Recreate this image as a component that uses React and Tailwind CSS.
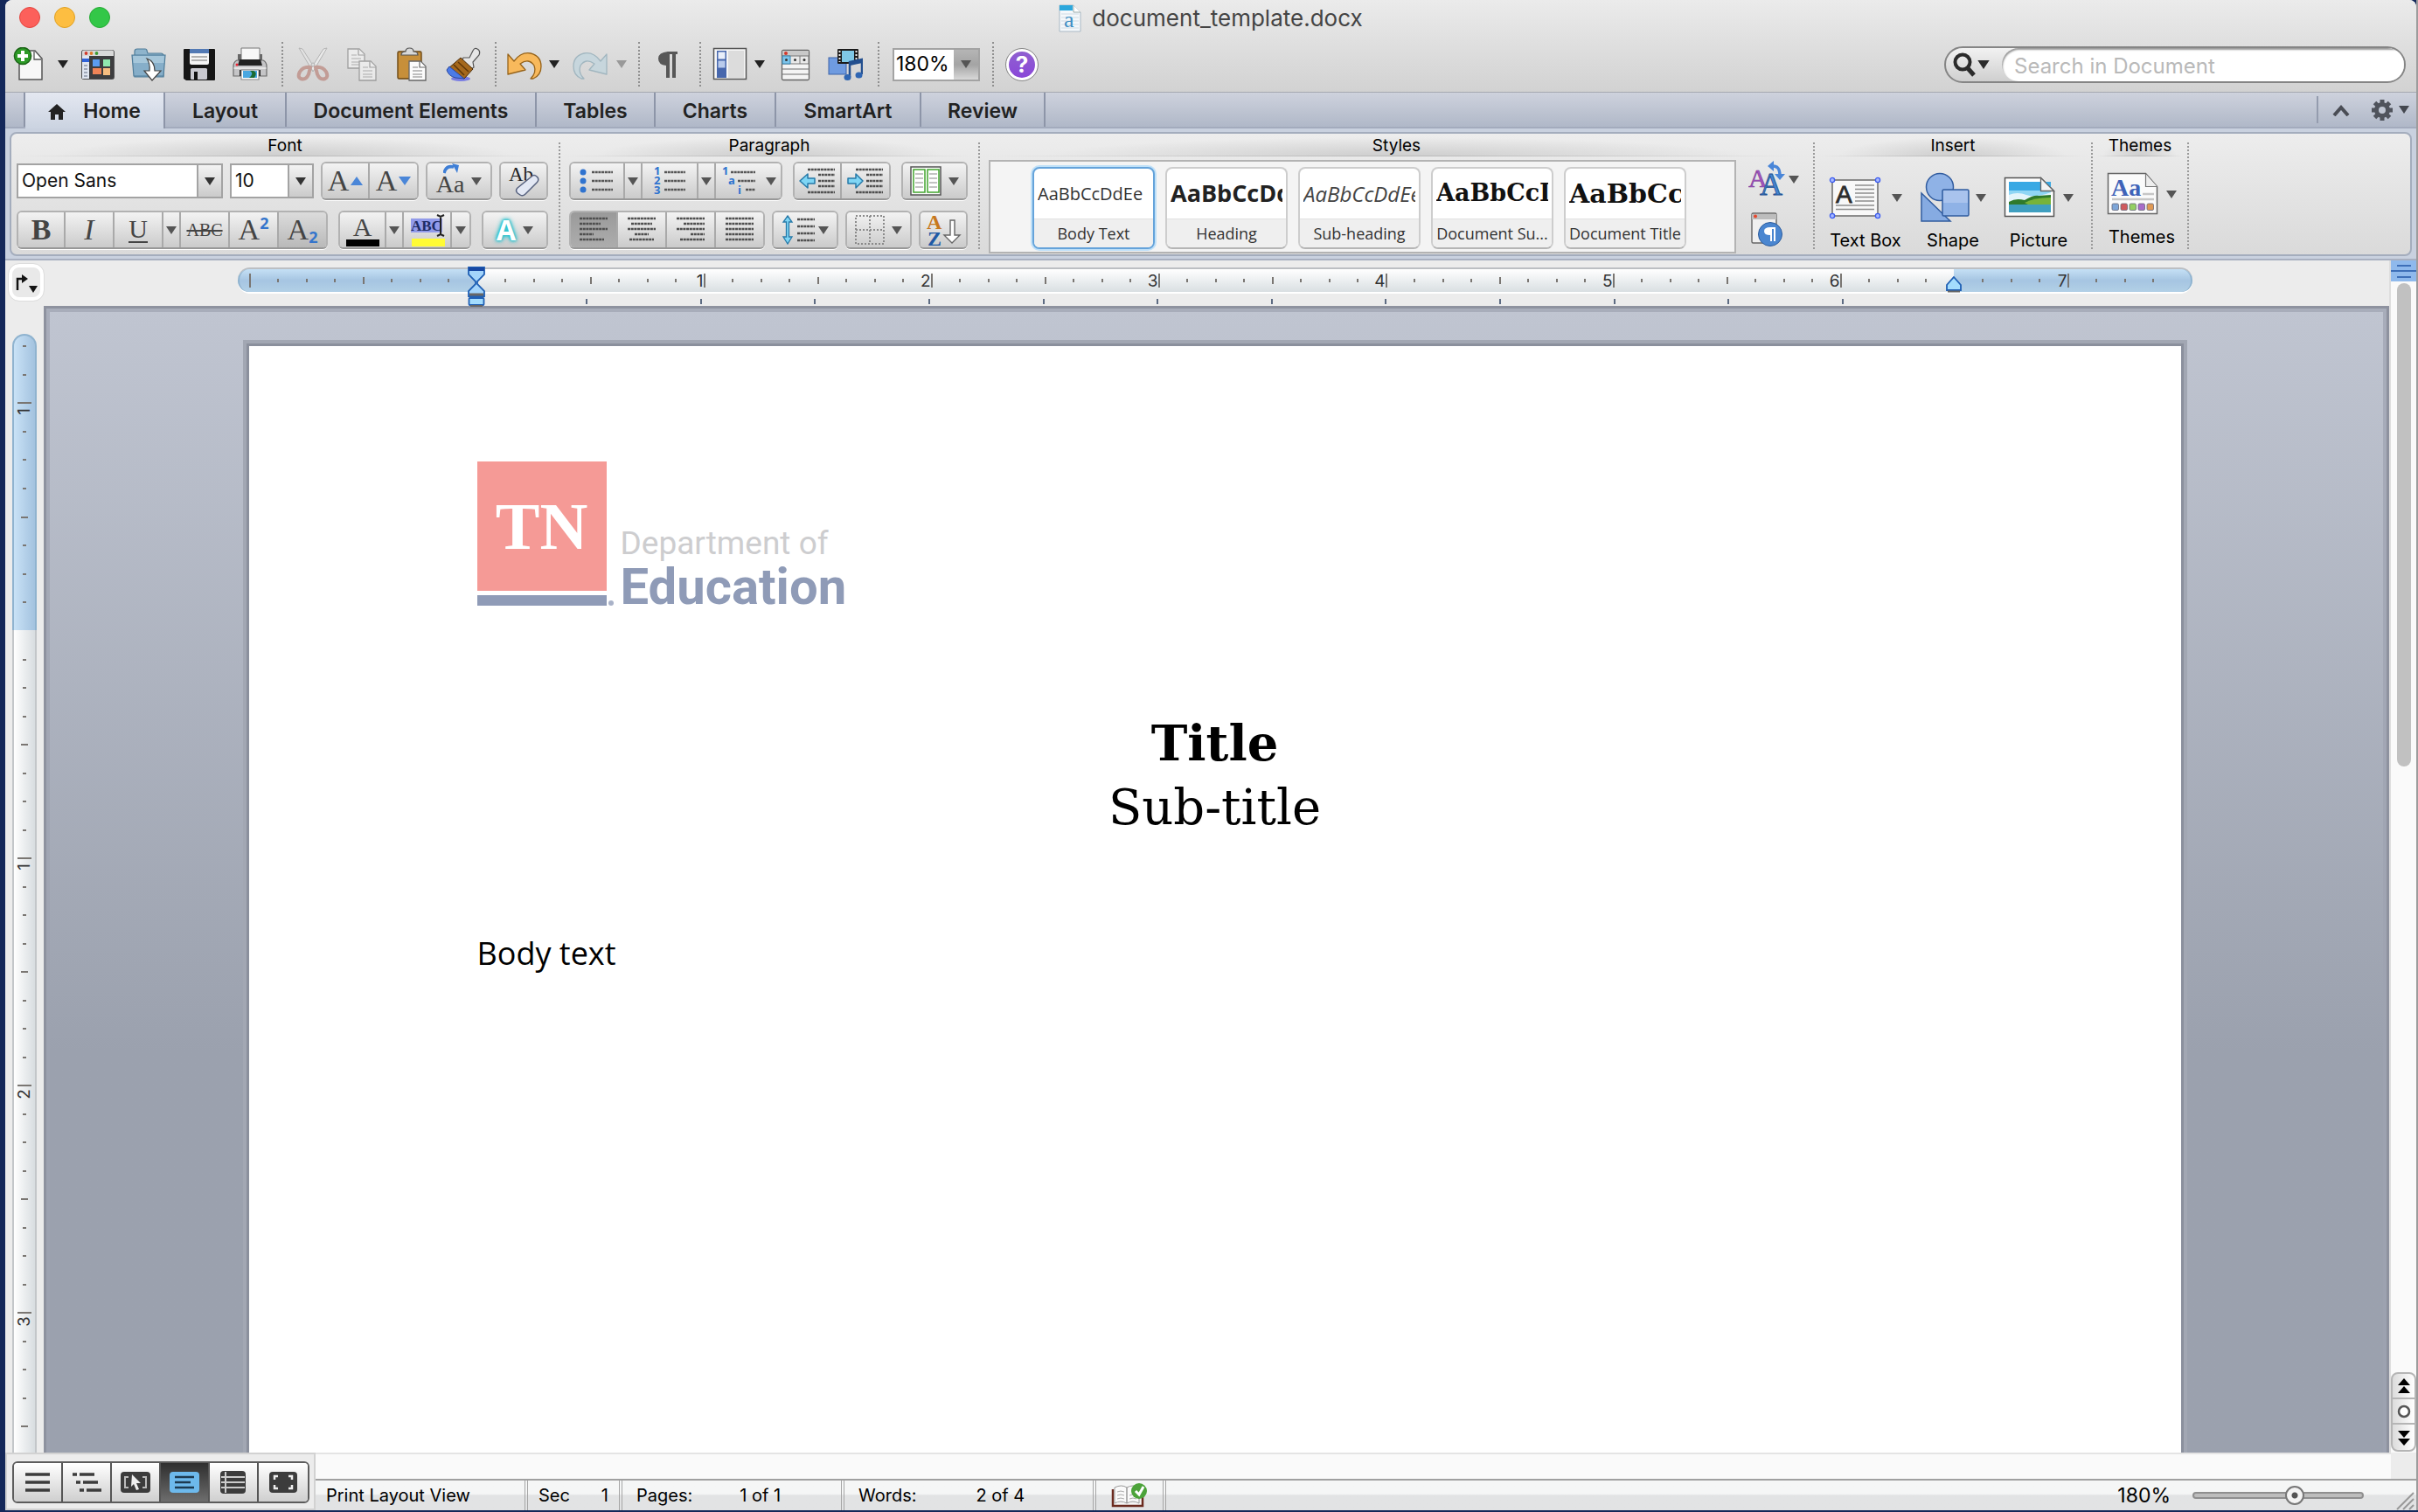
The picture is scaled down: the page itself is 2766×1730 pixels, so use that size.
import React from "react";

const cx = (...a) => a.filter(Boolean).join(" ");

/* ---------- small shared pieces ---------- */

function Caret({ className = "text-[#555]", big }) {
  return (
    <svg width={big ? 14 : 12} height={big ? 10 : 9} viewBox="0 0 12 9" className={cx("shrink-0", className)} aria-hidden="true">
      <path d="M0 0h12L6 9z" fill="currentColor" />
    </svg>
  );
}

function Dots({ className }) {
  return <div className={cx("flex justify-center self-stretch", className)}><span className="border-l-2 border-dotted border-[#8f8f8f]" /></div>;
}

function Tool({ label, className, children }) {
  return (
    <button aria-label={label} className={cx("flex h-[44px] shrink-0 items-center justify-center", className)}>
      {children}
    </button>
  );
}

function Icon({ children, w = 40, h = 40, box, className }) {
  return (
    <svg width={w} height={h} viewBox={box || `0 0 ${w} ${h}`} fill="none" className={cx("shrink-0", className)} aria-hidden="true">
      {children}
    </svg>
  );
}

/* ---------- toolbar icons ---------- */

const NewDoc = () => (
  <Icon>
    <path d="M7 4h18l8 9v24H7z" fill="#f7f7f7" stroke="#555" strokeWidth="1.5" />
    <path d="M24 5v9h8" fill="#fff" stroke="#555" strokeWidth="1.3" />
    <circle cx="11" cy="10" r="9.6" fill="#2d9a27" stroke="#1c6517" strokeWidth="1.5" />
    <path d="M11 4v12M5 10h12" stroke="#fff" strokeWidth="4" />
  </Icon>
);
const Gallery = () => (
  <Icon>
    <rect x="1.5" y="3.500" width="37" height="33" rx="2" fill="#3d3d3f" stroke="#4e4e50" />
    <path d="M2 5q0-1.500 2-1.500h32q2 0 2 1.500v5H2z" fill="#d9d9d9" />
    <circle cx="6.500" cy="7" r="1.900" fill="#d33a2c" /><circle cx="12.500" cy="7" r="1.900" fill="#e07b28" /><circle cx="18.500" cy="7" r="1.900" fill="#3f9b32" />
    <rect x="2" y="10" width="8" height="26" fill="#dfe5f0" /><rect x="2" y="13" width="8" height="4" fill="#2f62d8" />
    <path d="M4 21h4M4 25h4M4 29h4M4 33h4" stroke="#8a93a5" strokeWidth="1.500" />
    <rect x="14" y="14" width="8" height="8" fill="#5b9cf0" /><rect x="26" y="14" width="8" height="8" fill="#8fe8ae" />
    <rect x="14" y="24" width="10" height="7" fill="#f08457" /><rect x="26" y="24" width="8" height="8" fill="#f6bd80" />
  </Icon>
);
const OpenFolder = () => (
  <Icon>
    <path d="M4 34V5q0-3 3-3h9q2 0 2 2l1 3h15q3 0 3 3v24z" fill="#8eb4cc" stroke="#4f7c99" strokeWidth="1.200" />
    <path d="M1 9h38l-2 24H3z" fill="#86aec9" stroke="#4f7c99" strokeWidth="1.200" />
    <path d="M2 10h36l-.6 8H2.600z" fill="#a5c6da" />
    <path d="M18 13q9 3 9 14h7l-10 11-9-11h6q1-8-3-14z" fill="#fff" stroke="#444" strokeWidth="1.200" />
  </Icon>
);
const Save = () => (
  <Icon>
    <path d="M2 3q0-1 1-1h34q1 0 1 1v34q0 1-1 1H5l-3-2z" fill="#161616" />
    <path d="M9 2h22v16q0 2-2 2H11q-2 0-2-2z" fill="#f5f5f5" /><rect x="9" y="2" width="22" height="5" fill="#5279b4" />
    <path d="M11 11h18M11 15h18" stroke="#9a9a9a" strokeWidth="1.300" />
    <rect x="10" y="24" width="19" height="13" rx="1.500" fill="#c9c9d0" /><path d="M14 28h4v9h-4z" fill="#111" />
  </Icon>
);
const Print = () => (
  <Icon>
    <path d="M6 8h28v9H6z" fill="#666" /><path d="M10 1h21v16H10z" fill="#f7f7f7" stroke="#777" />
    <path d="M5 15h30q4 2 4 7v11H1V22q0-5 4-7z" fill="#c5c5c7" stroke="#6b6b6b" strokeWidth="1.200" />
    <path d="M8 14h24l2 7H6z" fill="#222" /><path d="M1.500 24h37" stroke="#f1f1f1" strokeWidth="1.500" />
    <circle cx="5" cy="20" r="1.500" fill="#e23" />
    <rect x="8" y="26" width="24" height="7" fill="#222" /><rect x="10" y="26" width="20" height="11" fill="#fff" stroke="#888" />
    <rect x="12" y="27" width="16" height="8" fill="#4aa7e0" /><path d="M20 27q5 3-1 8h6q4-6-1-8z" fill="#1b6b32" />
  </Icon>
);
const Cut = () => (
  <Icon className="opacity-60">
    <path d="M4 1l4 1 14 22-2 4z" fill="#e7e7e7" stroke="#999" /><path d="M36 1l-4 1-14 22 2 4z" fill="#f4f4f4" stroke="#999" />
    <path d="M17 23Q9 22 5 28q-3 6 1 8 6 2 9-5z" stroke="#b5766b" strokeWidth="4" /><path d="M23 23q8-1 12 5 3 6-1 8-6 2-9-5z" stroke="#b5766b" strokeWidth="4" />
    <circle cx="20" cy="20" r="2" fill="#ddd" stroke="#999" />
  </Icon>
);
const PageLines = ({ x, y }) => (
  <g transform={`translate(${x} ${y})`}>
    <path d="M1 1h13l6 6v16H1z" fill="#fcfcfc" stroke="#666" strokeWidth="1.300" /><path d="M13 1v7h7" stroke="#666" strokeWidth="1.200" fill="#fff" />
    <path d="M5 8h6M5 12h11M5 16h11M5 19h11" stroke="#aaa" strokeWidth="1.300" />
  </g>
);
const Copy = () => (<Icon className="opacity-50"><PageLines x="3" y="1" /><PageLines x="16" y="15" /></Icon>);
const Paste = () => (
  <Icon>
    <rect x="3" y="5" width="27" height="31" rx="1.500" fill="#c78f3a" stroke="#6b4612" strokeWidth="1.400" />
    <path d="M7 9q0-4 5-4 0-4 4.500-4T21 5q5 0 5 4z" fill="#d8d8d8" stroke="#555" strokeWidth="1.200" />
    <PageLines x="15" y="15" />
  </Icon>
);
const Brush = () => (
  <Icon>
    <ellipse cx="17" cy="36" rx="11" ry="3" fill="#5a5fe8" opacity=".75" />
    <path d="M36 2q4 2 2 7l-7 8 1 6-6 4-9-9 3-6 7 0 4-8q2-4 5-2z" fill="#e6e6e6" stroke="#555" strokeWidth="1.200" />
    <path d="M17 12l14 13-10 11L2 25z" fill="#a5681c" stroke="#4a2b08" /><path d="M14 17l12 11M9 20l12 12" stroke="#5f3709" strokeWidth="1.500" />
    <path d="M4 22l17 14-10-1Q3 33 1 26z" fill="#4c7be8" stroke="#2b479d" />
  </Icon>
);
const UndoArrow = ({ redo }) => (
  <Icon className={redo ? "-scale-x-100 opacity-80" : ""}>
    <path d="M1 8l7 8Q16 5 27 7q12 3 12 15 0 10-9 14h-3q7-7 4-15-6-9-16-2l6 7-20 5z" fill={redo ? "#c3d6de" : "#f8b95c"} stroke={redo ? "#94aeba" : "#96631a"} strokeWidth="1.300" strokeLinejoin="round" />
  </Icon>
);
const SidebarIcon = () => (
  <Icon>
    <rect x="1.500" y="1.500" width="37" height="35" fill="#f6f6f6" stroke="#555" strokeWidth="1.500" />
    <rect x="5" y="4" width="11" height="31" fill="#4767ad" /><rect x="6.500" y="5.500" width="8" height="8" fill="#e9effa" /><rect x="6.500" y="15.500" width="8" height="8" fill="#b9cbec" />
    <rect x="18" y="4" width="18" height="31" fill="#dcdcdc" />
  </Icon>
);
const Toolbox = () => (
  <Icon w={34} h={40}>
    <rect x="1.500" y="3.500" width="31" height="34" rx="1.500" fill="#f4f4f4" stroke="#666" strokeWidth="1.300" />
    <path d="M2 4h30v6H2z" fill="#c9c9c9" /><circle cx="6" cy="7" r="2" fill="#d4372a" />
    <path d="M2 10h30v9H2z" fill="#e9e9e9" stroke="#777" /><path d="M2 10h9v9H2z" fill="#7cc3ea" stroke="#3b86b0" /><path d="M22 10v9" stroke="#777" />
    <circle cx="6.500" cy="14.500" r="1.500" fill="#333" /><circle cx="16.500" cy="14.500" r="1.500" fill="#333" /><circle cx="27" cy="14.500" r="1.500" fill="#333" />
    <path d="M2 25h30M2 31h30" stroke="#999" strokeWidth="1.300" />
  </Icon>
);
const Media = () => (
  <Icon>
    <rect x="1" y="12" width="20" height="19" fill="#6f9be0" stroke="#3c62a8" />
    <rect x="11" y="2" width="24" height="17" rx="1" fill="#1b1b1b" /><rect x="16" y="4" width="14" height="13" fill="#7fc8e6" />
    <path d="M13.500 4v13M32.500 4v13" stroke="#eee" strokeWidth="2" strokeDasharray="2 2" />
    <path d="M25 34V17l14-3v17" stroke="#24508f" strokeWidth="2.500" /><path d="M25 19l14-3" stroke="#24508f" strokeWidth="4" />
    <ellipse cx="22.500" cy="34.500" rx="4" ry="3.500" fill="#2f66b3" /><ellipse cx="35.500" cy="32" rx="4" ry="3.500" fill="#2f66b3" />
  </Icon>
);

/* ---------- ribbon pieces ---------- */

const FACE = "bg-linear-to-b from-[#f3f3f3] to-[#cbcbcb]";

function Seg({ children, label = "Options" }) {
  return (
    <div role="group" aria-label={label} className="flex h-[44px] shrink-0 divide-x-2 divide-[#a9a9a9] overflow-hidden rounded-md border-2 border-[#b2b2b2] border-b-[#989898] shadow-[0_1px_0_#fff]">
      {children}
    </div>
  );
}
function Btn({ label, w = "w-[56px]", on, dim, children }) {
  return (
    <button aria-label={label} className={cx("flex items-center justify-center gap-2", w, on ? "bg-linear-to-b from-[#9a9a9a] to-[#adadad]" : dim ? "bg-linear-to-b from-[#dcdcdc] to-[#b9b9b9]" : FACE)}>
      {children}
    </button>
  );
}
const Glyph = ({ className, size = "text-[34px] leading-[36px]", children }) => (
  <span className={cx("font-['Liberation_Serif',serif] text-[#444]", size, className)}>{children}</span>
);

function Group({ title, className, bodyClass, children }) {
  return (
    <section aria-label={title} className={cx("flex shrink-0 flex-col", className)}>
      <div className="mx-1 bg-[radial-gradient(ellipse_at_bottom,#cdcdcd,transparent_60%)]">
        <h2 className="h-[25px] pt-px text-center text-[19px] leading-[26px] text-black">{title}</h2>
        <div className="h-px bg-linear-to-r from-transparent via-[#b9b9b9] to-transparent" />
      </div>
      <div className={cx("flex flex-1", bodyClass)}>{children}</div>
    </section>
  );
}
const GroupDots = () => <div className="mt-2.5 mb-1.5 shrink-0 border-l-2 border-dotted border-[#9a9a9a]" />;

const Lines = ({ rows, w = 34, y0 = 2, step = 7 }) => (
  <Icon w={w} h={34}>
    {rows.map(([a, b], i) => (
      <path key={i} d={`M${a} ${y0 + i * step}H${b}`} stroke="#4e4e4e" strokeWidth="2.500" strokeDasharray="3 .7" />
    ))}
  </Icon>
);

function ListIcon({ marks, x, from }) {
  return (
    <Icon w={44} h={38}>
      {marks.map((m, i) => (
        <g key={i}>
          {m === "•" ? (
            <circle cx="6" cy={9 + i * 10} r="3.500" fill="#2f73cf" />
          ) : (
            <text x={x[i]} y={12 + i * 11} fontSize="13" fontWeight="700" fontFamily="Open Sans, sans-serif" fill="#2f73cf">{m}</text>
          )}
          <path d={`M${from[i]} ${9 + i * 10}H40`} stroke="#555" strokeWidth="2.500" strokeDasharray="3 .7" />
        </g>
      ))}
    </Icon>
  );
}

function IndentIcon({ right }) {
  return (
    <Icon w={42} h={34}>
      <path d="M10 4H41M22 10H41M22 17H41M22 23H41M10 30H41" stroke="#4e4e4e" strokeWidth="2.500" strokeDasharray="3 .7" />
      <path d={right ? "M18 17L10 9v5H1v6h9v5z" : "M1 17l9-8v5h8v6h-8v5z"} fill="#7fd6f5" stroke="#2679a8" strokeWidth="1.500" strokeLinejoin="round" />
    </Icon>
  );
}

function ComboBox({ label, value, className }) {
  return (
    <div className={cx("flex h-[40px] shrink-0 border-2 border-[#a3a3a3] bg-white", className)}>
      <input aria-label={label} defaultValue={value} className="min-w-0 flex-1 px-1 text-[21px] text-[#111] outline-none" />
      <button aria-label={label + " list"} className={cx("flex w-[28px] items-center justify-center border-l-2 border-[#a3a3a3]", FACE)}>
        <Caret className="text-[#333]" />
      </button>
    </div>
  );
}

function StyleCard({ name, sample, active }) {
  return (
    <button
      className={cx(
        "flex h-[94px] w-[140px] shrink-0 flex-col overflow-hidden rounded-lg border-2 bg-white",
        active ? "border-[#65a3da] shadow-[0_0_0_2px_#bfe0f8]" : "border-[#cdcdcd] border-b-[#b5b5b5]"
      )}
    >
      <span className={cx("mx-1 flex flex-1 items-center self-stretch overflow-hidden whitespace-nowrap", sample)}>AaBbCcDdEe</span>
      <span className="w-full border-t border-[#e2e2e2] bg-[#efefef] text-center font-['Open_Sans',sans-serif] text-[18px] leading-[32px] whitespace-nowrap text-[#333]">{name}</span>
    </button>
  );
}

function BigButton({ label, w, icon }) {
  return (
    <button className={cx("flex shrink-0 flex-col items-center", w)}>
      <span className="flex h-[70px] w-full items-center justify-between">
        {icon}
        <Caret />
      </span>
      <span className="text-[20px] leading-[28px] whitespace-nowrap text-black">{label}</span>
    </button>
  );
}

/* ---------- icons of the ribbon ---------- */

const TextBoxIcon = () => (
  <Icon w={60} h={50}>
    <rect x="4" y="5" width="52" height="41" fill="#f8f8f8" stroke="#6a6a6a" strokeWidth="1.500" />
    <text x="8" y="31" fontSize="28" fontFamily="Liberation Sans, sans-serif" fill="#2c2c2c" stroke="#2c2c2c" strokeWidth=".8">A</text>
    <path d="M30 11h22M30 15.500h22M30 20h22M30 24.500h22M30 29h22M8 34h44M8 38.500h44" stroke="#8d8d8d" strokeWidth="1.500" />
    {[[4, 5], [56, 5], [4, 46], [56, 46]].map(([x, y]) => <circle key={x + "-" + y} cx={x} cy={y} r="2.600" fill="#a9baff" stroke="#3b5cf0" strokeWidth="1.300" />)}
  </Icon>
);
const ShapeIcon = () => (
  <Icon w={58} h={58}>
    <circle cx="23" cy="17" r="15.500" fill="#8fb2e6" stroke="#315c9f" strokeWidth="1.500" />
    <path d="M2 24l33 32H2z" fill="#86abe2" stroke="#315c9f" strokeWidth="1.500" />
    <rect x="26" y="20" width="30" height="30" rx="1.500" fill="#8fb2e6" stroke="#315c9f" strokeWidth="1.500" />
    <path d="M27 21h28v14H27z" fill="#b3cbef" opacity=".7" />
  </Icon>
);
const PictureIcon = () => (
  <Icon w={60} h={50}>
    <path d="M1.500 2.500h41l15 15v29h-56z" fill="#fff" stroke="#555" strokeWidth="1.500" />
    <rect x="6" y="7" width="48" height="35" fill="#8fd6f5" /><rect x="6" y="7" width="48" height="10" fill="#3aa9e4" />
    <path d="M6 22q10-4 20 0t28-3v12H6z" fill="#e3f4fb" />
    <path d="M6 30q8-5 18-2 10-6 16-5l14-1v12H6z" fill="#2f7a2b" /><path d="M24 31q10-6 30-6v9H30z" fill="#77b33a" />
    <path d="M6 33h48v9H6z" fill="#3f9fc0" />
    <path d="M42.500 2.500v15h15z" fill="#f3f3f3" stroke="#666" strokeWidth="1.300" />
  </Icon>
);
const ThemesIcon = () => (
  <Icon w={60} h={50}>
    <path d="M1.500 1.500h43l13 15v31h-56z" fill="#fbfbfb" stroke="#666" strokeWidth="1.500" />
    <path d="M44.500 2v14.500h13" fill="#eee" stroke="#777" strokeWidth="1.200" />
    <text x="5" y="27" fontSize="28" fontWeight="700" fontFamily="Liberation Serif, serif" fill="#3f63b8">Aa</text>
    <path d="M41 25h13M6 31h48" stroke="#c6c6c6" strokeWidth="2.500" />
    {["#7ea6d8", "#cf5a5e", "#93cf62", "#a86cc8", "#e09a55"].map((c, i) => <rect key={c} x={6 + i * 10} y="36" width="7.500" height="7.500" rx="1.500" fill={c} stroke="#667" strokeWidth=".8" />)}
  </Icon>
);

/* ---------- rulers ---------- */

function HTicks({ from, to }) {
  const cells = [];
  for (let e = from; e < to; e++) cells.push(e);
  return cells.map((e) => {
    const inch = e % 8 === 0;
    const half = e % 4 === 0;
    const next = (e + 1) % 8 === 0 ? (e + 1) / 8 : 0;
    return (
      <span key={e} className="relative flex h-full min-w-0 flex-1 items-center justify-between">
        {e === 0 || e === 52 ? <span /> : <span className={cx("w-0.5 bg-[#7a7672]", inch ? "h-4" : half ? "h-2" : "h-1")} />}
        {next > 0 && <span className="text-[19px] leading-none text-[#333]">{next}</span>}
        {e === 0 && (
          <Icon w={20} h={46} className="absolute -top-[3px] -left-[10px]">
            <path d="M1 1h18v8l-8 8v3l8 8v6H1v-6l8-8v-3L1 9z" fill="#a3d4fb" stroke="#1f5fb4" strokeWidth="1.800" />
            <path d="M1 1h18v4H1z" fill="#1748a3" /><path d="M2 32h16" stroke="#666" strokeWidth="3" />
            <rect x="1.500" y="36" width="17" height="8" rx="1" fill="#a3dcfd" stroke="#1f5fb4" strokeWidth="1.800" /><path d="M3 45h14" stroke="#666" strokeWidth="2" />
          </Icon>
        )}
        {e === 52 && (
          <Icon w={20} h={20} className="absolute top-2 -left-[10px]">
            <path d="M10 1l8 9v6H2v-6z" fill="#a3dcfd" stroke="#1f5fb4" strokeWidth="1.800" /><path d="M3 17.500h14" stroke="#666" strokeWidth="2" />
          </Icon>
        )}
      </span>
    );
  });
}

function VTicks({ from, to }) {
  const cells = [];
  for (let e = from; e < to; e++) cells.push(e);
  return cells.map((e) => {
    const inch = e % 8 === 0;
    const half = e % 4 === 0;
    return (
      <span key={e} className="flex min-h-0 flex-1 flex-col items-center">
        <span className={cx("h-0.5 bg-[#7a7672]", e === 0 ? "w-0" : inch ? "w-4" : half ? "w-2" : "w-1")} />
        {inch && e !== 0 && <span className="-rotate-90 text-[19px] leading-[18px] text-[#333]">{Math.abs(e / 8)}</span>}
      </span>
    );
  });
}

/* ---------- window parts ---------- */

function TitleBar() {
  return (
    <div className="relative flex h-[42px] items-center justify-center">
      <div className="absolute top-2 left-4 flex gap-4">
        <button aria-label="Close" className="size-6 rounded-full border border-[#e2463f] bg-[#fc605b]" />
        <button aria-label="Minimize" className="size-6 rounded-full border border-[#dfa023] bg-[#fdbe41]" />
        <button aria-label="Zoom" className="size-6 rounded-full border border-[#27aa35] bg-[#33c748]" />
      </div>
      <h1 className="flex items-center gap-3 text-[26px] leading-[40px] text-[#444]">
        <Icon w={26} h={32}>
          <path d="M1 1h16l8 8v22H1z" fill="#f4f8fb" stroke="#a9b8c4" /><path d="M1 1h15v6H1z" fill="#2ca7dc" /><path d="M17 1v8h8" fill="#fff" stroke="#9aa" />
          <path d="M3 11h20M3 15h20M3 19h20M3 23h20M3 27h20" stroke="#cfdbe4" />
          <text x="6" y="26" fontSize="26" fontFamily="Liberation Serif, serif" fill="#3f8fc4">a</text>
        </Icon>
        document_template.docx
      </h1>
    </div>
  );
}

function Toolbar() {
  return (
    <div className="flex h-[63px] items-center px-3">
      <Tool label="New document" className="w-[34px]"><NewDoc /></Tool>
      <Tool label="New document options" className="w-[31px] pl-2"><Caret className="text-[#222]" /></Tool>
      <Tool label="Open template gallery" className="w-[58px]"><Gallery /></Tool>
      <Tool label="Open" className="w-[58px]"><OpenFolder /></Tool>
      <Tool label="Save" className="w-[58px]"><Save /></Tool>
      <Tool label="Print" className="w-[58px]"><Print /></Tool>
      <Dots className="w-4 py-1.5" />
      <Tool label="Cut" className="w-[54px]"><Cut /></Tool>
      <Tool label="Copy" className="w-[58px]"><Copy /></Tool>
      <Tool label="Paste" className="w-[58px]"><Paste /></Tool>
      <Tool label="Format painter" className="w-[58px]"><Brush /></Tool>
      <Dots className="w-4 py-1.5" />
      <Tool label="Undo" className="w-[50px]"><UndoArrow /></Tool>
      <Tool label="Undo history" className="w-[18px]"><Caret className="text-[#222]" /></Tool>
      <Tool label="Redo" className="w-[60px] pl-1"><UndoArrow redo /></Tool>
      <Tool label="Redo history" className="w-4"><Caret className="text-[#999]" /></Tool>
      <Dots className="w-6 py-1.5" />
      <Tool label="Show formatting marks" className="w-[42px]">
        <Icon w={22} h={30}><path d="M11 0h11v3h-2v27h-4V3h-3v27H9V16Q0 15 0 8t11-8z" fill="#575757" /></Icon>
      </Tool>
      <Dots className="w-8 py-1.5" />
      <Tool label="Sidebar" className="w-9"><SidebarIcon /></Tool>
      <Tool label="Sidebar options" className="w-8"><Caret className="text-[#222]" /></Tool>
      <Tool label="Toolbox" className="w-[50px]"><Toolbox /></Tool>
      <Tool label="Media browser" className="w-16"><Media /></Tool>
      <Dots className="w-3 py-1.5" />
      <div className="ml-2.5 flex h-[38px] w-[100px] shrink-0 border-2 border-[#a3a3a3] bg-white">
        <input aria-label="Zoom level" defaultValue="180%" className="min-w-0 flex-1 pl-0.5 text-[23px] text-black outline-none" />
        <button aria-label="Zoom list" className="flex w-[28px] items-center justify-center bg-linear-to-b from-[#b5b5b5] via-[#a4a4a4] to-[#d8d8d8]"><Caret /></button>
      </div>
      <Dots className="w-[30px] py-1.5" />
      <Tool label="Help" className="w-9">
        <span className="flex size-[36px] items-center justify-center rounded-full border-[3px] border-white bg-linear-to-b from-[#9060d0] to-[#8a46d8] text-[26px] leading-none font-bold text-white outline-1 outline-[#888]">?</span>
      </Tool>
      <div className="ml-auto flex h-[42px] w-[528px] overflow-hidden rounded-full border-2 border-[#858585] bg-linear-to-b from-[#f2f2f2] to-[#cfcfcf]">
        <button aria-label="Search options" className="flex w-[64px] items-center gap-0.5 pl-2">
          <Icon w={26} h={28}><circle cx="11" cy="11" r="8.500" stroke="#2b2b2b" strokeWidth="4" /><path d="M16 17l8 9" stroke="#2b2b2b" strokeWidth="5" /></Icon>
          <Caret big className="text-[#2b2b2b]" />
        </button>
        <input aria-label="Search in Document" placeholder="Search in Document" className="min-w-0 flex-1 rounded-l-full bg-white pt-1 pl-3.5 text-[24px] outline-none shadow-[inset_1px_2px_2px_#999] placeholder:text-[#b9b9b9]" />
      </div>
    </div>
  );
}

function Tabs() {
  const tabs = [["Layout", "w-[139px]"], ["Document Elements", "w-[286px]"], ["Tables", "w-[136px]"], ["Charts", "w-[138px]"], ["SmartArt", "w-[166px]"], ["Review", "w-[142px]"]];
  return (
    <nav className="flex h-[42px] border-t border-b-2 border-t-[#a5a8b0] border-b-[#a3abbd] bg-linear-to-b from-[#ced2dd] to-[#b0b8c8] text-[23px] font-semibold text-[#222] [text-shadow:0_2px_0_#e3e6ee]">
      <div className="w-[23px] shrink-0 border-r-2 border-[#8d95a8]" />
      <button className="-mb-0.5 flex w-[160px] shrink-0 items-center justify-center gap-5 border-r-2 border-[#8d95a8] bg-linear-to-b from-[#e4e8f1] to-[#cbd3e1] pt-0.5">
        <Icon w={20} h={18}><path d="M10 0l10 9h-3v9h-5v-6H8v6H3V9H0z" fill="#222" /></Icon>
        Home
      </button>
      {tabs.map(([t, w]) => (
        <button key={t} className={cx("shrink-0 border-r-2 border-[#8d95a8] pt-1", w)}>{t}</button>
      ))}
      <div className="ml-auto flex items-center py-1">
        <span className="mr-4 h-full border-l-2 border-[#949cae]" />
        <button aria-label="Collapse ribbon" className="mr-6"><Icon w={20} h={14}><path d="M2 13l8-9 8 9" stroke="#4a4d55" strokeWidth="4" /></Icon></button>
        <button aria-label="Ribbon settings" className="mr-2 flex items-center gap-1.5">
          <Icon w={26} h={26}>
            {[0, 45, 90, 135].map((a) => <rect key={a} x="10.500" y="1" width="5" height="24" fill="#4f535c" transform={`rotate(${a} 13 13)`} />)}
            <circle cx="13" cy="13" r="6.500" stroke="#4f535c" strokeWidth="5" /><circle cx="13" cy="13" r="4" fill="#c0c6d3" />
          </Icon>
          <Caret className="text-[#44474f]" />
        </button>
      </div>
    </nav>
  );
}

function FontGroup() {
  return (
    <Group title="Font" bodyClass="flex-col gap-3 pt-1.5 pl-1.5 pr-3">
      <div className="flex h-[44px] items-center gap-2">
        <ComboBox label="Font" value="Open Sans" className="w-[236px]" />
        <ComboBox label="Font size" value="10" className="w-[96px]" />
        <Seg label="Font size steps">
          <Btn label="Grow font" w="w-[54px]"><Glyph className="-mr-1.5">A</Glyph><Icon w={14} h={10} ><path d="M7 0l7 10H0z" fill="#4a86d8" /></Icon></Btn>
          <Btn label="Shrink font" w="w-[54px]"><Glyph className="-mr-1.5">A</Glyph><Icon w={14} h={10}><path d="M0 0h14L7 10z" fill="#4a86d8" /></Icon></Btn>
        </Seg>
        <Seg label="Case">
          <Btn label="Change case" w="w-[72px]">
            <span className="relative pt-2">
              <Glyph size="text-[28px] leading-[28px]">Aa</Glyph>
              <Icon w={18} h={12} className="absolute -top-0.5 left-2"><path d="M1 11Q3 2 12 4" stroke="#3f7fd6" strokeWidth="3.500" /><path d="M10 0l8 2-2 9z" fill="#3f7fd6" /></Icon>
            </span>
            <Caret />
          </Btn>
        </Seg>
        <Seg label="Clear">
          <Btn label="Clear formatting" w="w-[52px]">
            <Icon w={38} h={38}>
              <text x="2" y="19" fontSize="23" fontFamily="Liberation Serif, serif" fill="#222">Ab</text>
              <path d="M28 14q3-3 6 0l1 1q2 3-1 6L21 34q-3 3-6 1l-3-2q-3-3 0-6z" fill="#e3e8f4" stroke="#56617e" strokeWidth="1.500" />
            </Icon>
          </Btn>
        </Seg>
      </div>
      <div className="flex gap-3">
        <Seg label="Character">
          <Btn label="Bold" w="w-[54px]"><Glyph className="font-bold">B</Glyph></Btn>
          <Btn label="Italic"><Glyph className="italic">I</Glyph></Btn>
          <Btn label="Underline"><Glyph size="text-[30px] leading-[28px]" className="border-b-2 border-[#444]">U</Glyph></Btn>
          <Btn label="Underline style" w="w-[20px]"><Caret /></Btn>
          <Btn label="Strikethrough"><Glyph size="text-[20px] leading-[28px]" className="line-through">ABC</Glyph></Btn>
          <Btn label="Superscript"><Glyph className="-mr-1">A</Glyph><span className="-ml-1 self-start font-['Open_Sans',sans-serif] text-[18px] leading-[24px] font-bold text-[#3575cc]">2</span></Btn>
          <Btn label="Subscript" dim w="w-[54px]"><Glyph className="-mr-1">A</Glyph><span className="-ml-1 self-end font-['Open_Sans',sans-serif] text-[18px] leading-[24px] font-bold text-[#3575cc]">2</span></Btn>
        </Seg>
        <Seg label="Colour">
          <Btn label="Font color" w="w-[53px]"><Glyph size="text-[30px] leading-[29px]" className="w-[38px] border-b-8 border-black text-center">A</Glyph></Btn>
          <Btn label="Font color list" w="w-[20px]"><Caret /></Btn>
          <Btn label="Highlight" w="w-[55px]">
            <Icon w={42} h={40}>
              <rect x="2" y="7" width="36" height="16" fill="#929bea" /><text x="2" y="21" fontSize="17" fontWeight="700" fontFamily="Liberation Serif, serif" fill="#1d2c66">ABC</text>
              <rect x="3" y="30" width="38" height="9" fill="#fffb35" /><path d="M32 3l4 2 4-2M36 5v20M32 27l4-2 4 2" stroke="#222" strokeWidth="2" />
            </Icon>
          </Btn>
          <Btn label="Highlight list" w="w-[20px]"><Caret /></Btn>
        </Seg>
        <Seg label="Effects">
          <Btn label="Text effects" w="w-[72px]">
            <span className="font-['Open_Sans',sans-serif] text-[32px] leading-none font-bold text-white [text-shadow:0_0_3px_#2cc3cf,0_0_3px_#2cc3cf,0_0_5px_#2cc3cf,0_0_6px_#2cc3cf]">A</span>
            <Caret />
          </Btn>
        </Seg>
      </div>
    </Group>
  );
}

function ParagraphGroup() {
  const full = [1, 33];
  return (
    <Group title="Paragraph" bodyClass="flex-col gap-3 pt-1.5 pl-2.5 pr-3">
      <div className="flex gap-3">
        <Seg label="Lists">
          <Btn label="Bulleted list" w="w-[62px]"><ListIcon marks={["•", "•", "•"]} from={[16, 16, 16]} /></Btn>
          <Btn label="Bulleted list styles" w="w-[20px]"><Caret /></Btn>
          <Btn label="Numbered list" w="w-[64px]"><ListIcon marks={["1", "2", "3"]} x={[4, 4, 4]} from={[16, 16, 16]} /></Btn>
          <Btn label="Numbered list styles" w="w-[20px]"><Caret /></Btn>
          <Btn label="Multilevel list" w="w-[74px]"><ListIcon marks={["1", "a", "i"]} x={[2, 9, 20]} from={[12, 20, 29]} /><Caret /></Btn>
        </Seg>
        <Seg label="Indent">
          <Btn label="Decrease indent" w="w-[54px]"><IndentIcon /></Btn>
          <Btn label="Increase indent" w="w-[54px]"><IndentIcon right /></Btn>
        </Seg>
        <Seg label="Columns">
          <Btn label="Columns" w="w-[72px]">
            <Icon w={36} h={34}>
              <rect x="1" y="1" width="34" height="32" fill="#fff" stroke="#555" strokeWidth="1.500" />
              <rect x="4" y="4" width="13" height="26" stroke="#42a52e" strokeWidth="1.500" /><rect x="20" y="4" width="13" height="26" stroke="#42a52e" strokeWidth="1.500" />
              <path d="M6 9h9M6 14h9M6 19h9M6 24h9M22 9h9M22 14h9M22 19h9M22 24h9" stroke="#b0b0b0" strokeWidth="1.500" />
            </Icon>
            <Caret />
          </Btn>
        </Seg>
      </div>
      <div className="flex gap-2">
        <Seg label="Alignment">
          <Btn label="Align left" on w="w-[54px]"><Lines y0={4} step={6} rows={[full, [1, 25], full, [1, 17], [1, 29]]} /></Btn>
          <Btn label="Center"><Lines y0={4} step={6} rows={[full, [5, 29], full, [9, 25], [3, 31]]} /></Btn>
          <Btn label="Align right"><Lines y0={4} step={6} rows={[full, [9, 33], full, [17, 33], [5, 33]]} /></Btn>
          <Btn label="Justify" w="w-[54px]"><Lines y0={4} step={6} rows={[full, full, full, full, full]} /></Btn>
        </Seg>
        <Seg label="Spacing">
          <Btn label="Line spacing" w="w-[72px]">
            <Icon w={38} h={34}>
              <path d="M18 5H38M18 13H38M18 21H38M18 29H38" stroke="#4e4e4e" strokeWidth="2.500" strokeDasharray="3 .7" />
              <path d="M7 1l5 7H8.500v17H12l-5 8-5-8h3.500V8H2z" fill="#7fd6f5" stroke="#2679a8" strokeWidth="1.300" />
            </Icon>
            <Caret className="-ml-1 text-[#555]" />
          </Btn>
        </Seg>
        <Seg label="Borders">
          <Btn label="Borders" w="w-[72px]">
            <Icon w={34} h={36}><path d="M1 2h32v32H1zM17 2v32M1 18h32" stroke="#8a8a8a" strokeWidth="2" strokeDasharray="2 2" /></Icon>
            <Caret />
          </Btn>
        </Seg>
        <Seg label="Sort">
          <Btn label="Sort" w="w-[52px]">
            <Icon w={42} h={38}>
              <text x="2" y="18" fontSize="24" fontWeight="700" fontFamily="Liberation Serif, serif" fill="#c7781d">A</text>
              <text x="3" y="37" fontSize="24" fontWeight="700" fontFamily="Liberation Serif, serif" fill="#1f5aa5">Z</text>
              <path d="M29 8h5v17h6l-9 9-9-9h7z" fill="#fff" stroke="#666" strokeWidth="1.400" />
            </Icon>
          </Btn>
        </Seg>
      </div>
    </Group>
  );
}

function StylesGroup() {
  return (
    <Group title="Styles" bodyClass="pt-1 pl-2.5 pr-4">
      <div className="flex h-[107px] w-[855px] gap-3 border-2 border-[#b3b3b3] bg-[#f4f4f4] pt-1.5 pl-12">
        <StyleCard active name="Body Text" sample="font-['Open_Sans',sans-serif] text-[20px] text-[#333]" />
        <StyleCard name="Heading" sample="font-['Open_Sans',sans-serif] font-bold text-[27px] text-[#222]" />
        <StyleCard name="Sub-heading" sample="font-['Open_Sans',sans-serif] italic text-[24px] text-[#444]" />
        <StyleCard name="Document Su..." sample="font-['DejaVu_Serif',serif] font-bold text-[27px] text-[#111]" />
        <StyleCard name="Document Title" sample="font-['DejaVu_Serif',serif] font-bold text-[30px] text-[#111]" />
      </div>
      <div className="ml-3.5 flex flex-col gap-4 pt-px">
        <button aria-label="Change styles" className="flex items-center gap-1">
          <Icon w={42} h={42}>
            <text x="0" y="30" fontSize="30" fontFamily="Liberation Serif, serif" fill="#a254bd" stroke="#7b3c98" strokeWidth=".6">A</text>
            <text x="13" y="39" fontSize="36" fontFamily="Liberation Serif, serif" fill="#4384cf" stroke="#1e4f90" strokeWidth=".8">A</text>
            <path d="M27 6q9-1 9 11" stroke="#4a86d8" strokeWidth="3.500" /><path d="M29 0v12l-7-6zM30 15h12l-6 7z" fill="#4a86d8" />
          </Icon>
          <Caret />
        </button>
        <button aria-label="Styles pane" className="w-fit">
          <Icon w={42} h={42}>
            <rect x="4" y="2" width="28" height="34" rx="1.500" fill="#f0f0f0" stroke="#666" strokeWidth="1.400" /><path d="M4 3h28v6H4z" fill="#bdbdbd" /><circle cx="8" cy="5.500" r="2" fill="#e8472c" />
            <circle cx="25" cy="26" r="13.500" fill="#4a86d0" stroke="#2c5c9d" />
            <path d="M25 18h6v16h-2V20h-2v14h-2v-7q-7 0-7-4.500T25 18z" fill="#fff" />
          </Icon>
        </button>
      </div>
    </Group>
  );
}

function Ribbon() {
  return (
    <div className="border-b-2 border-[#a9b0c0] bg-[#c9d1df] px-[5px] pt-1 pb-[3px]">
      <div className="flex h-[142px] overflow-hidden rounded-lg border-2 border-[#a4adbd] bg-linear-to-b from-[#ededed] to-[#dadada]">
        <FontGroup />
        <GroupDots />
        <ParagraphGroup />
        <GroupDots />
        <StylesGroup />
        <GroupDots />
        <Group title="Insert" bodyClass="gap-5 pt-3 pl-4 pr-5">
          <BigButton label="Text Box" w="w-[84px]" icon={<TextBoxIcon />} />
          <BigButton label="Shape" w="w-[76px]" icon={<ShapeIcon />} />
          <BigButton label="Picture" w="w-[80px]" icon={<PictureIcon />} />
        </Group>
        <GroupDots />
        <Group title="Themes" bodyClass="pt-2 pl-4 pr-3">
          <BigButton label="Themes" w="w-[80px]" icon={<ThemesIcon />} />
        </Group>
        <GroupDots />
      </div>
    </div>
  );
}

function RulerRow() {
  const halves = Array.from({ length: 17 }, (_, i) => i);
  return (
    <div className="flex h-[52px] shrink-0 bg-[#ececec]">
      <button aria-label="Tab stop type" className="mt-1 ml-1 flex h-[42px] w-[40px] shrink-0 items-center justify-center rounded-xl border-4 border-white bg-[#e9e9e9] outline-1 outline-[#ddd]">
        <Icon w={28} h={26}><path d="M4 22V9h9" stroke="#111" strokeWidth="2.500" /><path d="M9 4l7 5-7 5z" fill="#111" /><path d="M17 17h10l-5 8z" fill="#111" /></Icon>
      </button>
      <div className="flex min-w-0 flex-1 flex-col items-center pt-2 pr-1">
        <div className="flex h-[28px] w-[2236px] shrink-0 rounded-full border-t-2 border-[#bcbfc3] bg-linear-to-b from-white to-[#d9dfe2] shadow-[0_2px_0_#fff]">
          <div className="flex w-[273px] rounded-l-full border-l-2 border-[#8fb3cf] bg-linear-to-b from-[#c5e0f5] via-[#a6c5e2] to-[#b2d0e6] pl-[11px]"><HTicks from={-8} to={0} /></div>
          <div className="flex w-[1690px]"><HTicks from={0} to={52} /></div>
          <div className="flex flex-1 rounded-r-full border-r-2 border-[#8fb3cf] bg-linear-to-b from-[#c5e0f5] via-[#a6c5e2] to-[#b2d0e6] pr-[11px]"><HTicks from={52} to={60} /></div>
        </div>
        <div className="mt-2 flex h-1.5 w-[2210px]">
          {halves.map((i) => <span key={i} className={cx("flex-1", i > 2 && i < 15 && "border-l-2 border-[#5d6b82]")} />)}
        </div>
      </div>
    </div>
  );
}

function Page() {
  return (
    <div className="mx-auto mt-[32px] w-[2224px] border-4 border-b-0 border-[#a2a7b3]">
      <article className="flex h-[1400px] flex-col border-[3px] border-b-0 border-[#8b909d] bg-white px-[261px] pt-[132px]">
        <div className="flex items-end gap-4">
          <div className="relative flex flex-col gap-[5px]">
            <div className="flex h-[148px] w-[148px] items-center justify-center bg-[#f59a96] font-['Liberation_Serif',serif] text-[76px] font-bold text-white">TN</div>
            <div className="h-[12px] bg-[#8f9bb7]" />
            <span className="absolute -right-2 bottom-0 size-1.5 rounded-full bg-[#a9b2c8]" />
          </div>
          <div className="font-[Roboto,sans-serif]">
            <div className="text-[37px] leading-[54px] text-[#cdcdcf]">Department of</div>
            <div className="text-[58px] leading-[44px] font-bold text-[#8f9bb7]">Education</div>
          </div>
        </div>
        <h2 className="mt-[120px] text-center font-['DejaVu_Serif',serif] text-[56px] leading-[74px] font-bold text-black">Title</h2>
        <p className="text-center font-['DejaVu_Serif',serif] text-[56px] leading-[74px] text-black">Sub-title</p>
        <p className="mt-[104px] font-['Open_Sans',sans-serif] text-[36px] leading-[52px] text-black">Body text</p>
      </article>
    </div>
  );
}

function Workspace() {
  return (
    <div className="flex min-h-0 flex-1 overflow-hidden bg-[#ececec]">
      <div className="flex w-[44px] shrink-0 flex-col overflow-hidden pt-[32px] pl-2">
        <div className="flex h-[339px] w-[28px] shrink-0 flex-col rounded-t-full border-x-2 border-t-2 border-[#8fb3cf] bg-linear-to-r from-[#c9e2f6] to-[#a3c2df] pt-[11px]"><VTicks from={-10} to={0} /></div>
        <div className="flex h-[1040px] w-[28px] shrink-0 flex-col border-x-2 border-[#c3c6c9] bg-linear-to-r from-white to-[#d8dde0]"><VTicks from={0} to={32} /></div>
      </div>
      <main className="min-w-0 flex-1 overflow-hidden border-x-[3px] border-t-[3px] border-[#8e929f] bg-linear-to-b from-[#c0c5d1] to-[#9ba1ae] to-65%">
        <div className="h-full overflow-hidden border-4 border-b-0 border-[#9ea3b0]/70 pr-1"><Page /></div>
      </main>
    </div>
  );
}

function ScrollColumn() {
  return (
    <div className="flex w-[31px] shrink-0 flex-col items-center border-l-2 border-[#dedede] bg-[#fafafa]">
      <button aria-label="Split window" className="flex h-6 w-full shrink-0 flex-col gap-0.5 bg-[#3e6fb8]">
        <span className="flex flex-1 items-center justify-center self-stretch bg-[#8fb9ec]"><span className="h-0.5 w-4 bg-[#3e6fb8]" /></span>
        <span className="flex flex-1 items-center justify-center self-stretch bg-[#8fb9ec]"><span className="h-0.5 w-4 bg-[#3e6fb8]" /></span>
      </button>
      <div className="mt-0.5 h-[553px] w-4 shrink-0 rounded-full bg-[#c1c1c1]" />
      <div className="mt-auto mb-px flex w-full flex-col divide-y-2 divide-[#b5b5b5] overflow-hidden rounded-lg border-2 border-[#b5b5b5] bg-linear-to-r from-[#dcdcdc] to-white">
        <button aria-label="Previous page" className="flex h-[29px] items-center justify-center"><Icon w={14} h={18}><path d="M7 0l7 8H0zM7 9l7 8H0z" fill="#000" /></Icon></button>
        <button aria-label="Browse object" className="flex h-[29px] items-center justify-center"><Icon w={16} h={16}><circle cx="8" cy="8" r="6" stroke="#555" strokeWidth="2.500" fill="#fff" /></Icon></button>
        <button aria-label="Next page" className="flex h-[29px] items-center justify-center"><Icon w={14} h={18}><path d="M0 1h14L7 9zM0 10h14l-7 8z" fill="#000" /></Icon></button>
      </div>
    </div>
  );
}

function ViewButtons() {
  const dark = "#3c3c3c";
  const items = [
    ["Draft view", <Icon w={34} h={28}><path d="M3 5h28M3 14h28M3 23h28" stroke={dark} strokeWidth="3.500" /></Icon>],
    ["Outline view", <Icon w={36} h={28}><path d="M2 5h5M10 5h17M6 14h5M14 14h17M10 23h5M18 23h17" stroke={dark} strokeWidth="3.500" /></Icon>],
    ["Publishing layout", <Icon w={36} h={28}><rect x="1" y="2" width="34" height="24" rx="4" fill={dark} /><path d="M10 8H6v12h4M26 8h4v12h-4" stroke="#bbb" strokeWidth="2" /><path d="M14 5l10 10h-5l3 7-3 1-3-7-3 3z" fill="#eee" /></Icon>],
    ["Print layout", <Icon w={36} h={28}><rect x="1" y="2" width="34" height="24" rx="4" fill="#6db9ec" /><path d="M7 8h22M7 14h18M7 20h22" stroke="#1d3a50" strokeWidth="2.500" /></Icon>],
    ["Notebook layout", <Icon w={34} h={28}><rect x="2" y="1" width="29" height="26" rx="4" fill={dark} /><path d="M8 2v24M3 8h27M3 14h27M3 20h27" stroke="#ccc" strokeWidth="2" /></Icon>],
    ["Full screen", <Icon w={34} h={28}><rect x="1" y="2" width="32" height="24" rx="4" fill={dark} /><path d="M7 11V7h4M23 7h4v4M27 17v4h-4M11 21H7v-4" stroke="#eee" strokeWidth="2.500" /></Icon>],
  ];
  return (
    <div className="flex w-[355px] shrink-0 items-center border-2 border-[#d2d2d2] bg-[#ececec] pt-0.5 pl-1.5">
      <div className="flex h-[48px] divide-x-2 divide-[#555] overflow-hidden rounded-md border-2 border-[#5c5c5c]">
        {items.map(([l, icon], i) => (
          <button key={l} aria-label={l} className={cx("flex w-[56px] items-center justify-center", i === 3 ? "bg-linear-to-b from-[#2f2f2f] to-[#6e6e6e]" : "bg-linear-to-b from-white to-[#cfcfcf]")}>{icon}</button>
        ))}
      </div>
    </div>
  );
}

function Bottom() {
  const cell = "flex items-center border-r-4 border-double border-[#a5a5a5] px-3 whitespace-nowrap";
  return (
    <footer className="flex h-[66px] shrink-0 bg-[#ececec]">
      <ViewButtons />
      <div className="flex min-w-0 flex-1 flex-col">
        <div className="mr-[29px] h-[30px] border-t-2 border-[#e4e4e4] bg-[#fafafa]" />
        <div className="flex flex-1 border-t-2 border-[#a0a0a0] bg-linear-to-b from-[#f5f6f6] from-45% to-[#e2e3e4] to-50% text-[20px] text-black">
          <div className={cx(cell, "w-[243px] text-[20px]")}>Print Layout View</div>
          <div className={cx(cell, "w-[108px] justify-between")}><span>Sec</span><span>1</span></div>
          <div className={cx(cell, "w-[254px] gap-[54px]")}><span className="pl-1">Pages:</span><span>1 of 1</span></div>
          <div className={cx(cell, "w-[288px] gap-[68px]")}><span className="pl-1">Words:</span><span>2 of 4</span></div>
          <div className={cx(cell, "w-[80px] justify-center")}>
            <Icon w={42} h={30}>
              <path d="M2 8v19h34V10" fill="#f5f5f5" stroke="#6b2a1e" strokeWidth="2.500" /><path d="M4 6q8-4 14 0v18q-7-4-14 0zM18 6q7-4 14 0v18q-7-4-14 0z" fill="#fafafa" stroke="#999" />
              <path d="M7 11q4-2 8 0M7 15q4-2 8 0M7 19q4-2 8 0M21 15q4-2 8 0M21 19q4-2 8 0" stroke="#aaa" />
              <circle cx="32" cy="10" r="9" fill="#4ca33a" /><path d="M28 10l4 4 5-9" stroke="#fff" strokeWidth="3" />
            </Icon>
          </div>
          <div className="ml-auto flex items-center text-[23px]">
            <label htmlFor="zoom">180%</label>
            <input
              id="zoom" type="range" min="0" max="100" defaultValue="61"
              className="mr-[36px] ml-[25px] h-2 w-[196px] appearance-none rounded-full border-2 border-[#8f8f8f] bg-[#bdbdbd] [&::-webkit-slider-thumb]:size-[22px] [&::-webkit-slider-thumb]:appearance-none [&::-webkit-slider-thumb]:rounded-full [&::-webkit-slider-thumb]:border-2 [&::-webkit-slider-thumb]:border-[#777] [&::-webkit-slider-thumb]:bg-[radial-gradient(circle,#555_3px,#f4f4f4_4px)]"
            />
            <Icon w={22} h={22} className="mr-0.5 self-end"><path d="M2 21L21 2M9 21L21 9M16 21l5-5" stroke="#999" strokeWidth="2" /></Icon>
          </div>
        </div>
      </div>
    </footer>
  );
}

export default function App() {
  return (
    <div className="flex h-screen overflow-hidden bg-[#14285a] pb-0.5 pl-1.5 font-[Inter,sans-serif]">
      <div className="flex min-w-0 flex-1 flex-col overflow-hidden rounded-tl-lg rounded-tr-lg bg-[#ececec]">
        <header className="shrink-0">
          <div className="bg-linear-to-b from-[#ebebeb] to-[#d2d2d2]">
            <TitleBar />
            <Toolbar />
          </div>
          <Tabs />
          <Ribbon />
        </header>
        <div className="flex min-h-0 flex-1">
          <div className="flex min-w-0 flex-1 flex-col">
            <RulerRow />
            <Workspace />
          </div>
          <ScrollColumn />
        </div>
        <Bottom />
      </div>
      <div className="w-0.5 shrink-0 bg-[#9c9c9c]" />
    </div>
  );
}
